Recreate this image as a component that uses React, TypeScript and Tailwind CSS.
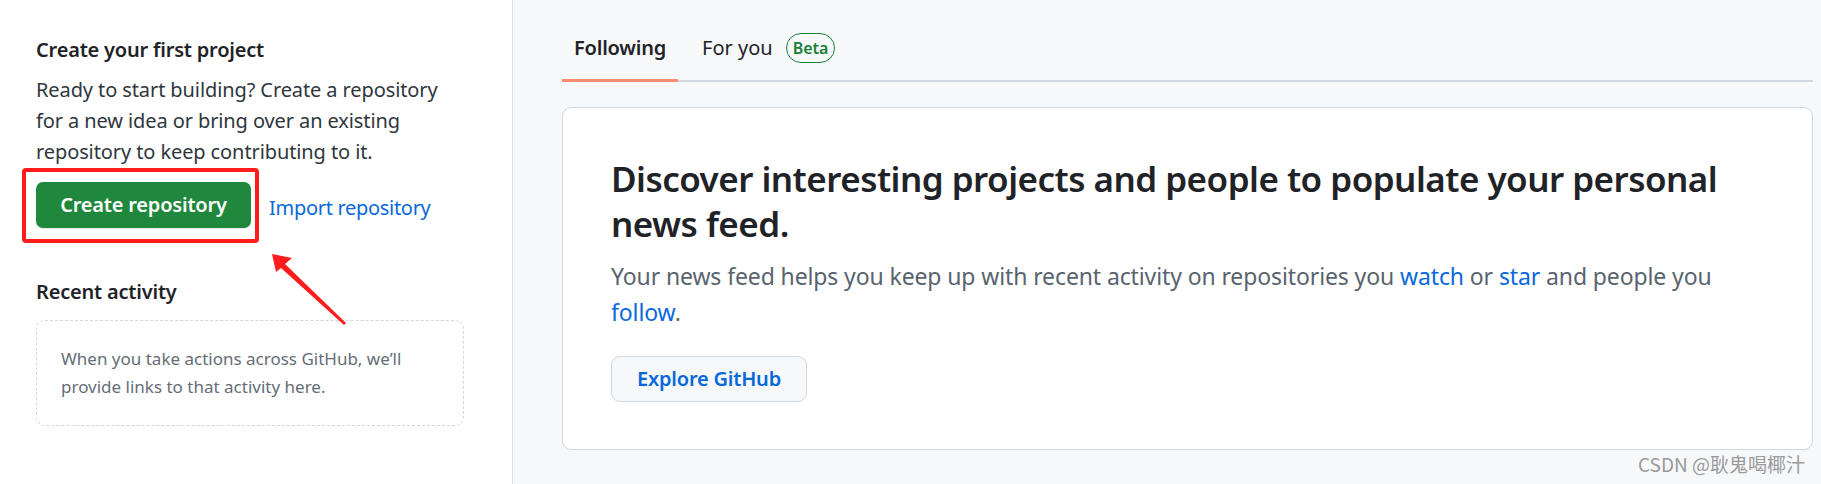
export default function App() {
  return (
    <div className="relative flex h-[484px] w-[1821px] overflow-hidden bg-[#f6f8fa] font-['Noto_Sans',sans-serif] text-[#1f2328]">
      {/* Left sidebar */}
      <aside className="w-[513px] shrink-0 border-r border-[#d8dee4] bg-white pl-[36px] pr-[48px] pt-[35px]">
        <h2 className="text-[20px] font-semibold leading-[30px] tracking-[-0.01em]">Create your first project</h2>
        <p className="mt-[9px] text-[20px] leading-[31px] tracking-[-0.005em] text-[#2f363d]">
          Ready to start building? Create a repository for a new idea or bring over an existing repository to keep
          contributing to it.
        </p>
        <div className="mt-[15px] flex items-center gap-[18px]">
          <div className="relative">
            <button className="h-[46px] w-[215px] rounded-[7px] bg-[#1f883d] text-[20px] font-semibold tracking-[-0.01em] text-white shadow-[0_1px_0_rgba(31,35,40,0.1)]">
              Create repository
            </button>
            {/* annotation box */}
            <span className="pointer-events-none absolute -bottom-[15px] -left-[14px] -right-[8px] -top-[14px] rounded-[4px] border-[4px] border-[#ff1c1c]" />
          </div>
          <a href="#" className="mt-[5px] text-[20px] tracking-[-0.015em] text-[#0969da]">
            Import repository
          </a>
        </div>

        <h2 className="mt-[49px] text-[20px] font-semibold leading-[30px] tracking-[-0.01em]">Recent activity</h2>
        <div className="mt-[13px] rounded-[9px] border border-dashed border-[#d0d7de] p-[24px] text-[17px] leading-[28px] text-[#656d76]">
          When you take actions across GitHub, we’ll provide links to that activity here.
        </div>
      </aside>

      {/* Feed */}
      <main className="flex min-w-0 flex-1 flex-col pl-[49px] pr-[8px] pt-[16px]">
        <nav className="flex gap-[12px] border-b-2 border-[#d0d7de]">
          <div className="-mb-[2px] flex h-[66px] items-center border-b-[3px] border-[#fd8c73] px-[12px] text-[20px] font-semibold tracking-[-0.01em]">
            Following
          </div>
          <div className="-mb-[2px] flex h-[66px] items-center gap-[13px] border-b-[3px] border-transparent px-[12px] text-[20px]">
            <span>For you</span>
            <span className="rounded-full border border-[#1a7f37] px-[6px] text-[16px] font-semibold leading-[28px] text-[#1a7f37]">
              Beta
            </span>
          </div>
        </nav>

        <section className="mt-[25px] rounded-[9px] border border-[#d0d7de] bg-white px-[48px] pb-[47px] pt-[48px]">
          <h1 className="text-[35px] font-semibold leading-[45px] tracking-[-0.015em]">
            Discover interesting projects and people to populate your personal news feed.
          </h1>
          <p className="mt-[12px] text-[23px] leading-[36px] tracking-[-0.005em] text-[#59636e]">
            Your news feed helps you keep up with recent activity on repositories you{' '}
            <a href="#" className="text-[#0969da]">watch</a> or{' '}
            <a href="#" className="text-[#0969da]">star</a> and people you{' '}
            <a href="#" className="text-[#0969da]">follow</a>.
          </p>
          <button className="mt-[26px] h-[46px] rounded-[9px] border border-[#d0d7de] bg-[#f6f8fa] px-[25px] text-[20px] font-semibold tracking-[-0.01em] text-[#0969da]">
            Explore GitHub
          </button>
        </section>

        <div className="mt-[2px] pr-[8px] text-right font-['Noto_Sans_CJK_SC',sans-serif] text-[19px] leading-[24px] text-[#9a9a9a]">
          CSDN @耿鬼喝椰汁
        </div>
      </main>

      {/* annotation arrow */}
      <svg className="pointer-events-none absolute left-0 top-0" width="520" height="484" viewBox="0 0 520 484">
        <polygon
          points="272,254 292,258 285,264 346,323 344,325 281,268 276,272"
          fill="#ff1c1c"
        />
      </svg>
    </div>
  )
}
